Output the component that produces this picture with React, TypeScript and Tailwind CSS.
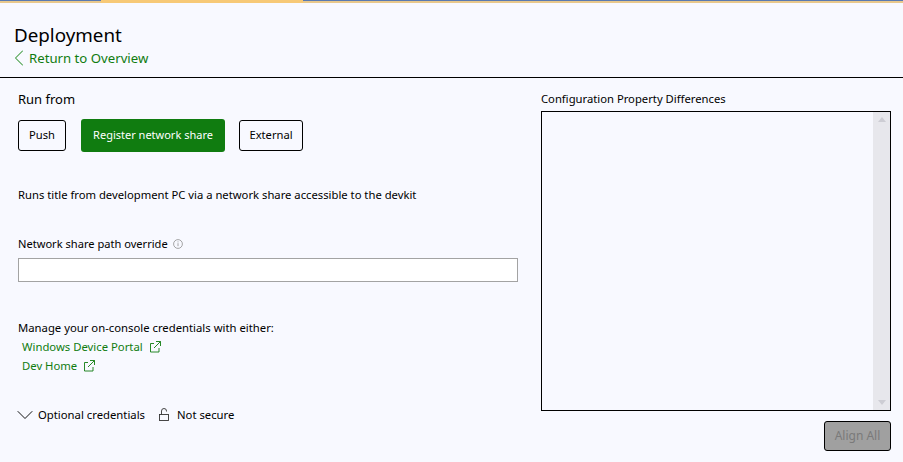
import { ChevronDown, ChevronLeft } from "lucide-react";

const links = ["Windows Device Portal", "Dev Home"];

function RunButton({ label, active, width }: { label: string; active?: boolean; width: string }) {
  if (active) {
    return <button className={`h-[33px] rounded-[3px] bg-[#107c10] text-white text-[11px] ${width}`}>{label}</button>;
  }
  return <button className={`h-[31px] rounded-[3px] border border-black text-[11.2px] text-black ${width}`}>{label}</button>;
}

// drawn by hand, the lucide one has a much heavier look at this size
function ExternalIcon() {
  return (
    <svg width="12" height="12" viewBox="0 0 12 12" fill="none" stroke="currentColor" strokeWidth="0.9">
      <path d="M5 2.5H1.5V11H10V7" />
      <path d="M7 .5h4.5V5M11.5 .5L5 7" />
    </svg>
  );
}

function OpenLock() {
  return (
    <svg width="10" height="13" viewBox="0 0 10 13" fill="none" stroke="#333" strokeWidth="0.9">
      <rect x=".5" y="6.5" width="9" height="6" />
      <path d="M2.5 6.5V3a2.5 2.5 0 0 1 5 0v.5" />
    </svg>
  );
}

function InfoIcon() {
  return (
    <svg width="10" height="10" viewBox="0 0 10 10" fill="none" stroke="#8f8f8f" strokeWidth=".8">
      <circle cx="5" cy="5" r="4.4" />
      <path d="M5 4.2v3M5 2.4v1" />
    </svg>
  );
}

export default function App() {
  return (
    <div className="w-[903px] h-[462px] overflow-hidden flex flex-col bg-[#f8f9ff] text-black font-['Noto_Sans','Open_Sans',sans-serif]">
      <div className="flex h-[3px] shrink-0 bg-[#f7c977]">
        <div className="w-[101px] border-t border-[#5a7ab0] bg-[#e8c88c]" />
        <div className="w-[202px] bg-[#f7c977]" />
        <div className="flex-1 border-t border-[#5a7ab0] bg-[#e8c88c]" />
      </div>
      <header className="h-[75px] shrink-0 border-b border-black pl-[14px] pt-[19px]">
        <h1 className="text-[18.8px] leading-[26px]">Deployment</h1>
        <a className="mt-px flex items-center h-[18px] text-[13.2px] leading-[18px] text-[#107c10]">
          <ChevronLeft size={28} strokeWidth={0.9} className="shrink-0 -ml-[9px] -mr-[4px] text-[#3f9a3f]" />
          Return to Overview
        </a>
      </header>
      <main className="flex flex-1 pl-[18px] pr-[12px]">
        <section className="w-[500px] pt-[12px]">
          <div className="text-[13px] leading-[18px]">Run from</div>
          <div className="mt-[11px] flex items-center gap-[14px]">
            <RunButton label="Push" width="w-[48px] mr-px" />
            <RunButton label="Register network share" active width="w-[144px]" />
            <RunButton label="External" width="w-[64px]" />
          </div>
          <p className="mt-[35px] text-[11.26px] leading-[16px]">Runs title from development PC via a network share accessible to the devkit</p>
          <div className="mt-[33px] flex items-center gap-[5px] text-[11.1px] leading-[16px]">
            Network share path override
            <InfoIcon />
          </div>
          <div className="mt-[6px] h-[24px] border border-[#a3a3a3] bg-white" />
          <p className="mt-[38px] text-[11.3px] leading-[16px]">Manage your on-console credentials with either:</p>
          <ul className="ml-[4px] mt-[3px] flex flex-col gap-[3px]">
            {links.map((l) => (
              <li key={l} className="flex items-center gap-[6px] text-[11.3px] leading-[16px] text-[#107c10]">
                {l}
                <ExternalIcon />
              </li>
            ))}
          </ul>
          <div className="mt-[33px] h-[16px] flex items-center text-[11.3px] leading-[16px]">
            <ChevronDown size={28} strokeWidth={0.8} className="shrink-0 -ml-[7px] -mr-[1px]" />
            Optional credentials
            <span className="ml-[14px] mr-[8px] -mt-[2px] flex"><OpenLock /></span>
            Not secure
          </div>
        </section>
        <section className="ml-[23px] flex-1 pt-[13px] flex flex-col">
          <div className="text-[11.25px] leading-[16px]">Configuration Property Differences</div>
          <div className="mt-[4px] h-[300px] border border-black flex justify-end">
            <div className="w-[17px] bg-[#e7e7ec] flex flex-col justify-between items-center py-[5px]">
              <div className="border-x-[4px] border-x-transparent border-b-[5px] border-b-[#cdcdd4]" />
              <div className="border-x-[4px] border-x-transparent border-t-[5px] border-t-[#cdcdd4]" />
            </div>
          </div>
          <div className="mt-[10px] flex justify-end">
            <button className="w-[67px] h-[30px] rounded-[3px] border border-black bg-[#a0a0a0] text-[12px] text-[#7a7a7a]">Align All</button>
          </div>
        </section>
      </main>
    </div>
  );
}
